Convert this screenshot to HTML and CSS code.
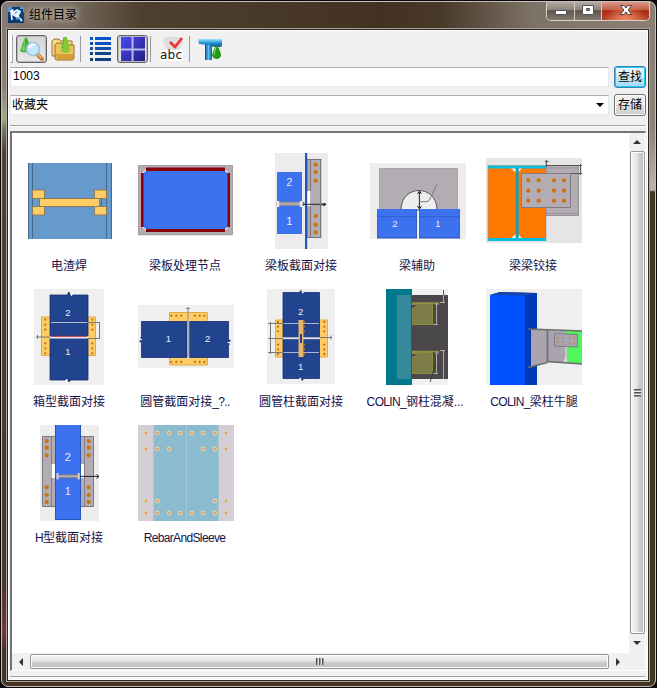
FILE: index.html
```html
<!DOCTYPE html>
<html lang="zh-CN">
<head>
<meta charset="utf-8">
<title>组件目录</title>
<link rel="stylesheet" href="styles.css">
</head>
<body>
<div class="window">
  <header class="titlebar">
    <svg class="app-icon" viewBox="0 0 16 16"><rect width="16" height="16" fill="#0b3c78"/><path d="M0 0h4v2H2v3H0zM12 0h4v5h-1V2h-3z" fill="#4d9bdc"/><path d="M2 3l3-1 1 2 3-2 4 2-1 3-3 4-5-3z" fill="#e8f3fb"/><path d="M3 4l1 9M9 8l5 6" stroke="#fff" stroke-width="1.6"/><path d="M8 12l4-1M7 6l2-1" stroke="#56a8e5" stroke-width="1.4"/></svg>
    <h1 class="title">组件目录</h1>
    <div class="controls">
      <span class="control minimize"><svg width="14" height="14" viewBox="0 0 14 14"><rect x="1.500" y="7.500" width="11" height="4" rx=".5" fill="#fff" stroke="#51545f"/></svg></span>
      <span class="control maximize"><svg width="14" height="14" viewBox="0 0 14 14"><path d="M1.500 2.500h11v9h-11zM5.500 5.500h3v2h-3z" fill="#fff" fill-rule="evenodd" stroke="#51545f"/></svg></span>
      <span class="control close"><svg width="14" height="14" viewBox="0 0 14 14"><path d="M1.500 2.500h3.500l2 2.500 2-2.500h3.500L9.200 7l3.300 4.500H9L7 9l-2 2.500H1.500L4.800 7z" fill="#fff" stroke="#57434a"/></svg></span>
    </div>
  </header>
  <main class="client">
    <div class="toolbar">
      <span class="grip"></span>
      <span class="tool pressed t-find"><svg width="26" height="26" viewBox="0 0 26 26"><path d="M7 1c2 1 3 6 4 13-2 3-8 3-10 1C3 11 4 4 7 1z" fill="#38b427"/><path d="M6 2c-1 5-2 8-4 12l4 1z" fill="#72d75d"/><path d="M18 18l5 5" stroke="#c47a30" stroke-width="4" stroke-linecap="round"/><path d="M18 18l5 4" stroke="#f4c080" stroke-width="1.500"/><circle cx="14" cy="13" r="6.500" fill="#c3e7fb" stroke="#9cc3e0" stroke-width="1.500"/><path d="M10 12c1-3 4-4 6-3" fill="none" stroke="#fff" stroke-width="2"/></svg></span>
      <span class="tool t-folder"><svg width="26" height="26" viewBox="0 0 26 26"><path d="M2 5l2-2h5l2 2h11v15H2z" fill="#f4d987" stroke="#9a7330"/><path d="M5 9l2-2h5l1 2h11v13q0 2-2 2H7q-2 0-2-2z" fill="#ecc45f" stroke="#9a6b22"/><path d="M6 18h17v4q0 1-2 1H7z" fill="#d59e37"/><path d="M14 1h3l3 12q0 4-4 4-5 0-5-3z" fill="#86c932"/><path d="M14 1l-2 11" stroke="#5baf2d"/></svg></span>
      <span class="separator s1"></span>
      <span class="tool t-list"><svg width="22" height="24" viewBox="0 0 22 24"><g fill="#0755cb"><path d="M0 0h3v3H0zM5 0h16v3H5z"/><path d="M0 5h3v3H0zM5 5h16v3H5z" fill="#0d50ba"/><path d="M0 10h3v3H0zM5 10h16v3H5z" fill="#1651a8"/><path d="M0 15h3v3H0zM5 15h16v3H5z" fill="#164584"/><path d="M0 21h3v3H0zM5 21h16v3H5z" fill="#113d7d"/></g></svg></span>
      <span class="tool pressed t-tiles"><svg width="24" height="24" viewBox="0 0 24 24"><defs><linearGradient id="tile" x2="1" y2="1"><stop stop-color="#4d4bf4"/><stop offset="1" stop-color="#211d83"/></linearGradient></defs><path d="M0 0h24v24H0z" fill="url(#tile)"/><path d="M11.500 0v24M0 12.500h24" stroke="#b8b8ec" stroke-width="2"/></svg></span>
      <span class="separator s2"></span>
      <span class="tool t-abc"><svg width="24" height="25" viewBox="0 0 24 25"><path d="M4 0h16l3 5-4 8H8L3 5z" fill="#dddddd"/><path d="M0 13h23v11H0z" fill="#fff"/><path d="M10 5l5 5 7-9" fill="none" stroke="#f03434" stroke-width="2.800"/><text x="0" y="22" class="abc" textLength="22">abc</text></svg></span>
      <span class="separator s3"></span>
      <span class="tool t-beam"><svg width="26" height="24" viewBox="0 0 26 24"><defs><linearGradient id="steel" x2="0" y2="1"><stop stop-color="#9ce5ff"/><stop offset=".5" stop-color="#2493d2"/><stop offset="1" stop-color="#075089"/></linearGradient><linearGradient id="post"><stop stop-color="#064d86"/><stop offset=".5" stop-color="#58bfef"/><stop offset="1" stop-color="#0a5799"/></linearGradient></defs><path d="M8 6h7v17H8z" fill="url(#post)"/><path d="M1 2h24v6q0 2-2 2h-5q-3 0-5-2L2 7z" fill="url(#steel)"/><path d="M19 8q-2 4-4 10 1 4 5 4 4-1 4-4-1-7-5-10z" fill="#239c18"/><path d="M19 10l-2 8" stroke="#7cdf5d"/></svg></span>
    </div>
    <div class="row search">
      <div class="field">1003</div>
      <button class="btn default">查找</button>
    </div>
    <div class="row folder">
      <div class="field combo"><span>收藏夹</span><i class="caret"></i></div>
      <button class="btn">存储</button>
    </div>
    <div class="groove"></div>
    <section class="listbox">
      <div class="items">
        <figure class="item"><svg class="thumb" viewBox="0 0 96 96"><path d="M6 10h84v76H6z" fill="#6699cc"/><path d="M6.500 10v76M10.500 10v76M84.500 10v76M89.500 10v76M17.500 45v8M79.500 45v8" stroke="#46688c"/><path d="M10.500 37h12v8.500h-12zM10.500 53.500h12V62h-12zM72.500 37h12v8.500h-12zM72.500 53.500h12V62h-12zM17.500 45.500h60v8h-60z" fill="#ffcc66" stroke="#8c7c55"/></svg><figcaption>电渣焊</figcaption></figure>
        <figure class="item"><svg class="thumb" viewBox="0 0 96 96"><path d="M0 12h95v71H0z" fill="#e8e5e8"/><path d="M.5 12.500h94v69H.5z" fill="#b3acb3" stroke="#a39da3"/><path d="M8 14.500h79V18H8zM8 76h79v3H8zM3 20h3v54H3zM89 20h3v54h-3z" fill="#8b0008"/><path d="M8 18h79l2.500 2.500v53L87 76H8l-2.500-2.500v-53z" fill="#3c72f0"/><path d="M5 20l3-3M87 17l3 3M5 74l3 3M87 77l3-3" stroke="#fff"/></svg><figcaption>梁板处理节点</figcaption></figure>
        <figure class="item"><svg class="thumb" viewBox="0 0 96 96"><path d="M21 0h53v96H21z" fill="#ececec"/><path d="M23 19h25v30H23zM23 52.700h25V81H23z" fill="#3c72f0"/><path d="M23 49h27v3.500H23z" fill="#b0a9b0" stroke="#777" stroke-width=".7"/><path d="M24 48v6M47 48v6" stroke="#e8e8e8" stroke-width="2.500"/><path d="M53 6.500h17.500v78H53z" fill="#b3acb3" stroke="#777"/><path d="M56.500 6.500v78" stroke="#7d777d"/><path d="M53 38h3.500v15H53z" fill="#fff"/><path d="M51 0h2.200v96H51z" fill="#2058bd"/><path class="bolts" d="M61.700 11.700h0M61.700 19h0M61.700 27.700h0M61.700 63h0M61.700 71.700h0M61.700 79.300h0"/><path d="M49 51.300h23M69 49.500l3 1.800-3 1.800" fill="none" stroke="#222"/><path d="M67.500 6h4v44h-4zM67.500 53h4v33h-4z" fill="#ececec"/><path d="M66.500 6v79" stroke="#777"/><text class="num large" x="35.300" y="33.300">2</text><text class="num large" x="35.300" y="72">1</text></svg><figcaption>梁板截面对接</figcaption></figure>
        <figure class="item"><svg class="thumb" viewBox="0 0 96 96"><path d="M0 10h96v76H0z" fill="#ededed"/><path d="M9.500 15.500H87.500V57H9.500z" fill="#b3acb3" stroke="#aaa3aa"/><path d="M31 57c0-26 36-26 36 0z" fill="#ededed" stroke="#555"/><path d="M7 56h40v29.500H7zM49 56h41v29.500H49z" fill="#315fc6"/><path d="M7.700 56h38.300v28H7.700zM49.500 56h39.800v28H49.500z" fill="#3c72f0"/><path d="M8 63.500h38M49.500 63.500h40" stroke="#315fd0"/><path d="M49.400 39v16M47.500 41l2-3 2 3M47.500 53l2 3 2-3" fill="none" stroke="#222"/><path d="M49 48.700h8q3-1 4-5l6-12" fill="none" stroke="#777"/><text class="num" x="25" y="73.500">2</text><text class="num" x="68" y="73.500">1</text></svg><figcaption>梁辅助</figcaption></figure>
        <figure class="item"><svg class="thumb" viewBox="0 0 96 96"><path d="M0 5h96v85H0z" fill="#e5e5e5"/><path d="M60 12.500h32.500v50H60z" fill="#b3acb3" stroke="#989198"/><path d="M60 15h32M60 60.500h32" stroke="#9b949b"/><path d="M2 12.500h58v75H2z" fill="#ff7900"/><path d="M2 12.500h58v3H2zM2 85h58v3H2z" fill="#04bde2"/><path d="M25 15.500h11l-5 5zM25 85h11l-5-5z" fill="#f3eee6"/><path d="M29.700 15h3v70h-3z" fill="#1d9eb0"/><path d="M2 12v76M60 7v81" stroke="#889" stroke-width=".6"/><path d="M35.500 20.500h49v34h-49z" fill="#b3acb3" stroke="#827b82"/><path class="bolts" d="M42.300 27.300h0M52.700 27.300h0M68 27.300h0M78 27.300h0M42.300 37.700h0M52.700 37.700h0M68 37.700h0M78 37.700h0M42.300 47.700h0M52.700 47.700h0M68 47.700h0M78 47.700h0"/><path d="M59 8.500h3.500M60.500 7v7M61 12.500h35M85 20.500h11M94.500 11v11" stroke="#555" fill="none"/></svg><figcaption>梁梁铰接</figcaption></figure>
        <figure class="item"><svg class="thumb" viewBox="0 0 96 96"><path d="M12 0h70v96H12z" fill="#efefef"/><path d="M19.500 28h9v38.500h-9zM65.500 28h8v38.500h-8z" fill="#ffcc66" stroke="#e3aa43"/><path d="M28 6h17l2-3 2 5 2-2h15v41H28zM28 49.500h38V91H49l-2 2-2-4-2 2H28z" fill="#22438e" stroke="#182e70" stroke-width=".8"/><path class="bolts small" d="M23.300 30.700h0M23.300 35.700h0M23.300 40.700h0M23.300 54.300h0M23.300 59.300h0M23.300 64.300h0M70.300 30.700h0M70.300 35.700h0M70.300 40.700h0M70.300 54.300h0M70.300 59.300h0M70.300 64.300h0"/><path d="M28 48.500h38" stroke="#e9e9ee" stroke-width="2"/><path d="M29 47.300h36" stroke="#b52d42"/><path d="M29 33.500h36" stroke="#b6bdd2"/><path d="M65 33.500h13M66 49.500h12M77.500 33v17M14 48h14M15.500 46v4" stroke="#777"/><text class="num" x="46" y="27">2</text><text class="num" x="46" y="66">1</text></svg><figcaption>箱型截面对接</figcaption></figure>
        <figure class="item"><svg class="thumb" viewBox="0 0 96 96"><path d="M0 16h96v63H0z" fill="#efefef"/><path d="M31.500 23.500h38V33h-38zM31.500 68h38v8h-38z" fill="#ffcc66" stroke="#e3aa43"/><path d="M3.500 32.500H49v36H3.500V54l-2-2 4-1-3-2 1-1zM51.500 32.500h39V50l2 2-5 1 4 2-1 1v12.500h-39z" fill="#22438e" stroke="#182e70" stroke-width=".8"/><path class="bolts small" d="M33.300 26.700h0M38.300 26.700h0M43.300 26.700h0M57 26.700h0M61.700 26.700h0M66.300 26.700h0M33.300 73h0M38.300 73h0M43.300 73h0M57 73h0M61.700 73h0M66.300 73h0"/><path d="M50.200 30v40" stroke="#ddd" stroke-width="2"/><path d="M50 18v50M48 19.500h4" stroke="#888"/><text class="num" x="30.300" y="52.500">1</text><text class="num" x="69.700" y="52.500">2</text></svg><figcaption>圆管截面对接<span class="latin">_?..</span></figcaption></figure>
        <figure class="item"><svg class="thumb" viewBox="0 0 96 96"><path d="M13 0h68v95H13z" fill="#efefef"/><path d="M21.500 31H30v37h-8.500zM65 31h8.500v37H65z" fill="#ffcc66" stroke="#e3aa43"/><path d="M29 3.500h16l2-2 1 4 2-2h15.500v45H29zM29 50h36.500v39.500H50l-2 2-1-4-2 2H29z" fill="#22438e" stroke="#182e70" stroke-width=".8"/><path d="M29 49.200h37" stroke="#dcd8e1" stroke-width="2"/><path d="M30 34.500h35M30 63.500h35" stroke="#aab4d0"/><path d="M44.500 31h5v37h-5z" fill="#e6b565"/><path d="M46 45h2v9h-2z" fill="#22438e"/><path class="bolts small" d="M24 33h0M24 37.700h0M24 42.300h0M24 55.700h0M24 60.300h0M24 65h0M70.300 33h0M70.300 37.700h0M70.300 42.300h0M70.300 55.700h0M70.300 60.300h0M70.300 65h0M50 33h0M50 37.700h0M50 42.300h0M50 55.700h0M50 60.300h0M50 65h0"/><path d="M14 34.500h16M14 49.500h15M14 63.500h16M16.500 33v32M66 48.500h12M77 46.500v4" stroke="#777"/><text class="num" x="46.700" y="26">2</text><text class="num" x="46.700" y="80.500">1</text></svg><figcaption>圆管柱截面对接</figcaption></figure>
        <figure class="item"><svg class="thumb" viewBox="0 0 96 96"><path d="M16 0h62v96H16z" fill="#f0f0f0"/><path d="M16 0h26v96H16z" fill="#00788b"/><path d="M42 6h36v84H42z" fill="#4b484b"/><path d="M27 6h15v84H27z" fill="#34899b"/><path d="M42 14.500h20.500v21H42zM42 63.500h20.500v21H42z" fill="#7c7d48" stroke="#8c8b39"/><path d="M42 14h27M42 62.500h27" stroke="#929147" stroke-width="1.700"/><path d="M42 15.500h5q-2 4-5 4M42 64.500h5q-2 4-5 4" fill="#4b484b" stroke="#aaa94c" stroke-width=".6"/><path d="M41.500 6v84" stroke="#166273"/><path d="M66.500 15v20M65 15h4M63 35.500h5M66.500 64v20M65 64h4M63 84.500h5M73.500 3v11M70 13.500h5M73.500 61v29M70 61.500h5" stroke="#c7c6c7" stroke-width=".8"/><path d="M73.500 1v5M65.500 74L60.300 93" stroke="#333" stroke-width=".8"/></svg><figcaption class="ellipsis"><span class="latin">COLIN_</span>钢柱混凝...</figcaption></figure>
        <figure class="item"><svg class="thumb" viewBox="0 0 96 96"><path d="M0 0h96v96H0z" fill="#efefef"/><path d="M4 6l10-3 37 1v92H4z" fill="#003bb5"/><path d="M4 6h35v90H4z" fill="#0051ff"/><path d="M4 6l10-3 2 3zM15 3l36 1-12 2.500L16 6z" fill="#1746a6"/><path d="M79 41l17 1v33l-15-2-1-14z" fill="#50f65b"/><path d="M45 41h16l18 1 2 5v21l-2 6-18-1-16 4.500z" fill="#aaa4ae"/><path d="M61.500 41v32" stroke="#77737a" stroke-width="2"/><path d="M42.300 40L96 42M61 72.500l35 2.300M42.300 78.500l19-5" stroke="#6b6d6e" stroke-width="1.700"/><path d="M68.500 44.500l23 1v12.500l-23-1z" fill="#aaa4ae" stroke="#817b86"/><path d="M80 58v10l-2 5" fill="none" stroke="#eee"/><path class="bolts tiny" d="M72 48.700h0M77 48.700h0M83.700 49h0M88.300 49h0M72 53.800h0M77 53.800h0M83.700 54.300h0M88.300 54.300h0"/></svg><figcaption class="bracket"><span class="latin">COLIN_</span>梁柱牛腿</figcaption></figure>
        <figure class="item"><svg class="thumb" viewBox="0 0 96 96"><path d="M18 0h59v96H18z" fill="#ededed"/><path d="M20.500 11.500h51v70h-51z" fill="#b3acb3" stroke="#7d777d"/><path d="M29.500 12v69M62.500 12v69" stroke="#857f85"/><path d="M29.700 39h3.500v14h-3.500zM59 39h3v14h-3z" fill="#fff"/><path d="M33 0h26v94.500H33z" fill="#3c72f0"/><path d="M33.500 0v94.500H58.500V0" fill="none" stroke="#2454ba"/><path d="M35 49.800h22v3H35z" fill="#b3acb3" stroke="#777" stroke-width=".8"/><path d="M35.500 48v6.500M56.700 48v6.500" stroke="#d5d2ce" stroke-width="2"/><path class="bolts" d="M24.700 16h0M24.700 22.700h0M24.700 30.300h0M24.700 62.300h0M24.700 70h0M24.700 77h0M66.700 16h0M66.700 22.700h0M66.700 30.300h0M66.700 62.300h0M66.700 70h0M66.700 77h0"/><path d="M58 51.400h19M74.500 49.500l2.500 2-2.500 2" fill="none" stroke="#222"/><text class="num large" x="45.700" y="36">2</text><text class="num large" x="45.700" y="70.300">1</text></svg><figcaption><span class="latin">H</span>型截面对接</figcaption></figure>
        <figure class="item"><svg class="thumb" viewBox="0 0 96 96"><path d="M0 0h96v96H0z" fill="#d4cdd6"/><path d="M16 0h64.500v96H16z" fill="#8abbce"/><path d="M48.500 0v96M15.700 0v96M80.500 0v96" stroke="#a9c6d2"/><path class="pin-ring" d="M8 8h0M19.300 8h0M31 8h0M42.300 8h0M53.700 8h0M65.300 8h0M76.700 8h0M88 8h0M8 24h0M19.300 24h0M31 24h0M65.300 24h0M76.700 24h0M88 24h0M8 76h0M19.300 76h0M76.700 76h0M88 76h0M8 88h0M19.300 88h0M31 88h0M42.300 88h0M53.700 88h0M65.300 88h0M76.700 88h0M88 88h0"/><path class="pin-core" d="M8 8h0M19.300 8h0M31 8h0M42.300 8h0M53.700 8h0M65.300 8h0M76.700 8h0M88 8h0M8 24h0M19.300 24h0M31 24h0M65.300 24h0M76.700 24h0M88 24h0M8 76h0M19.300 76h0M76.700 76h0M88 76h0M8 88h0M19.300 88h0M31 88h0M42.300 88h0M53.700 88h0M65.300 88h0M76.700 88h0M88 88h0"/></svg><figcaption class="rebar"><span class="latin">RebarAndSleeve</span></figcaption></figure>
      </div>
      <div class="scroll vertical"><i class="arrow up"></i><div class="thumbbar"><i class="ridges"></i></div><i class="arrow down"></i></div>
      <div class="scroll horizontal"><i class="arrow left"></i><div class="thumbbar"><i class="ridges"></i></div><i class="arrow right"></i></div>
      <div class="corner"></div>
    </section>
    <div class="groove bottom"></div>
  </main>
</div>
</body>
</html>
```
FILE: styles.css
```css
* { box-sizing: border-box; }
html, body { width: 657px; height: 688px; overflow: hidden; }
body { margin: 0; background: #08060a; font: 12px/14px "Liberation Sans", "Noto Sans CJK SC", sans-serif; color: #000; }
h1, figure { margin: 0; }
svg { display: block; }

.window {
  width: 655px; height: 686px; margin: 1px; padding: 0 6px 6px 5px;
  border: 1px solid #c9c0b7; border-radius: 7px;
  background:
    linear-gradient(90deg, #867970 0, #756a5d 70px, #4e3f2e 140px, #433222 380px, #493929 440px, #7d7266 530px, #8b8074 655px) 0 0 / 100% 27px no-repeat,
    linear-gradient(#877a70 0, #8b7e72 80px, #9aaf86 116px, #758064 126px, #514132 150px, #493728 580px, #753834 630px, #453525 650px) 0 0 / 8px 100% no-repeat,
    linear-gradient(#8a8075 0, #8b8278 125px, #bab5ae 188px, #433423 190px, #433423 100%) 100% 0 / 8px 100% no-repeat,
    #463621;
}
.titlebar { display: flex; align-items: flex-start; height: 27px; padding-left: 1px; }
.app-icon { width: 16px; height: 16px; margin: 5px 5px 0 0; }
.title { margin-top: 4px; font-size: 12px; line-height: 18px; font-weight: 400; text-shadow: 0 0 6px #c9c0b8, 0 0 9px #b9aea6, 0 0 12px #aaa09a; }
.controls { display: flex; width: 104px; height: 19px; margin-left: auto; margin-right: -1px; border: 1px solid #d8d1cb; border-top: 0; border-radius: 0 0 5px 5px; overflow: hidden; box-shadow: inset 0 0 1px #222; }
.control { display: flex; width: 28px; justify-content: center; padding-top: 1px; border-right: 1px solid #d7cec8; background: linear-gradient(#b3aba3, #8c8279 45%, #5f554c 48%, #84796f); }
.maximize { width: 27px; }
.close { flex: 1; border: 0; background: radial-gradient(ellipse at 50% 110%, #f49168, transparent 65%), linear-gradient(#dd9787, #c05b45 45%, #a82810 48%, #bd4931); }

.client { display: flex; flex-direction: column; height: 652px; padding: 2px 3px 0 2px; border: 1px solid #302a25; outline: 1px solid #aaa298; background: #f0f0f0; box-shadow: inset 0 0 0 1px #fff; }
.toolbar { display: flex; align-items: center; height: 34px; }
.grip { width: 3px; height: 28px; margin-right: 3px; border: solid #aaa; border-width: 0 1px 1px 0; background: #fff; }
.tool { display: flex; align-items: center; justify-content: center; width: 31px; height: 28px; }
.pressed { border: 1px solid #646464; border-radius: 3px; background: linear-gradient(#d5d5d5, #e8e8e8); box-shadow: inset 0 0 0 1px #b8b8b8; }
.t-list { margin-right: 1px; }
.separator { width: 1px; height: 26px; background: #999; }
.s1 { margin: 0 4px 0 2px; }
.s2 { margin: 0 5px 0 2px; }
.s3 { margin: 0 4px 0 2px; }
.abc { font: 12px "DejaVu Sans", sans-serif; fill: #111; }

.row { display: flex; justify-content: space-between; align-items: center; width: 636px; height: 22px; }
.row.folder { margin-top: 6px; }
.field { width: 599px; height: 20px; padding: 1px 2px; border: 1px solid #e3e9ef; border-top-color: #abadb3; background: #fff; border-radius: 1px; }
.combo { display: flex; align-items: center; justify-content: space-between; padding: 0 4px 0 1px; }
.caret { border: 4px solid transparent; border-top-color: #000; border-bottom: 0; }
.btn { width: 32px; height: 22px; padding: 0; border: 1px solid #707070; border-radius: 3px; font: inherit; color: #000; background: linear-gradient(#f2f2f2, #ebebeb 48%, #dddddd 50%, #cfcfcf); box-shadow: inset 0 0 0 1px #fcfcfc; }
.btn.default { border-color: #3c7fb1; background: linear-gradient(#eaf6fd, #d9f0fc 48%, #bee6fd 50%, #a7d9f5); box-shadow: inset 0 0 0 1px #23cbf7; }
.groove { height: 2px; margin-top: 9px; background: linear-gradient(#a0a0a0 50%, #fff 50%); flex: none; }

.listbox { display: grid; grid-template: 520px 17px / 617px 16px; width: 636px; height: 540px; margin-top: 4px; border: solid; border-width: 2px 1px 1px 2px; border-color: #747474 #fff #fff #747474; background: #fff; }
.items { display: grid; grid-template-columns: repeat(5, 116px); grid-auto-rows: 136px; align-content: start; padding-top: 20px; }
.item { display: flex; flex-direction: column; align-items: center; }
.thumb { width: 96px; height: 96px; }
figcaption { margin: 10px 0 0 -2px; white-space: nowrap; color: #14124a; }
.latin { letter-spacing: -.65px; }
.ellipsis { margin-left: -6px; letter-spacing: -.1px; }
.bracket { margin-left: 0; }
.rebar { margin-left: -3px; }
.num { font: 9.5px "Liberation Sans", sans-serif; fill: #e8edfb; text-anchor: middle; }
.num.large { font-size: 11px; }
.bolts { fill: none; stroke: #ca720b; stroke-width: 4.2; stroke-linecap: round; }
.bolts.small { stroke-width: 2.3; stroke: #bd7415; }
.bolts.tiny { stroke-width: 1.5; }
.pin-ring, .pin-core { stroke-linecap: round; fill: none; }
.pin-ring { stroke: #dcd7a4; stroke-width: 4.9; }
.pin-core { stroke: #e5957b; stroke-width: 2.6; }

.scroll { display: flex; align-items: center; background: #f0f0f0; }
.horizontal { align-items: flex-start; padding-top: 1px; }
.vertical { flex-direction: column; }
.arrow { display: flex; align-items: center; justify-content: center; flex: none; width: 18px; height: 18px; }
.horizontal .arrow { height: 15px; }
.arrow::before { content: ""; border: 4px solid transparent; }
.up::before { border-top: 0; border-bottom-color: #333; }
.down::before { border-bottom: 0; border-top-color: #333; }
.left::before { border-left: 0; border-right-color: #333; }
.right::before { border-right: 0; border-left-color: #333; }
.thumbbar { display: flex; align-items: center; justify-content: center; border: 1px solid #979797; border-radius: 2px; box-shadow: inset 0 0 0 1px #fafafa; }
.vertical .thumbbar { width: 15px; height: 483px; background: linear-gradient(90deg, #f5f5f5, #e5e5e7 45%, #cfcfd3 60%, #bcbcc2); }
.horizontal .thumbbar { width: 579px; height: 15px; background: linear-gradient(#f5f5f5, #e5e5e5 45%, #cfcfcf 55%, #bebebe); }
.ridges { width: 7px; height: 8px; background: repeating-linear-gradient(#555 0 1px, #999 1px 2px, #eee 2px 3px); }
.horizontal .ridges { width: 8px; height: 7px; background: repeating-linear-gradient(90deg, #555 0 1px, #999 1px 2px, #eee 2px 3px); }
.corner { background: #f0f0f0; }
.bottom { margin-top: 5px; }
```
